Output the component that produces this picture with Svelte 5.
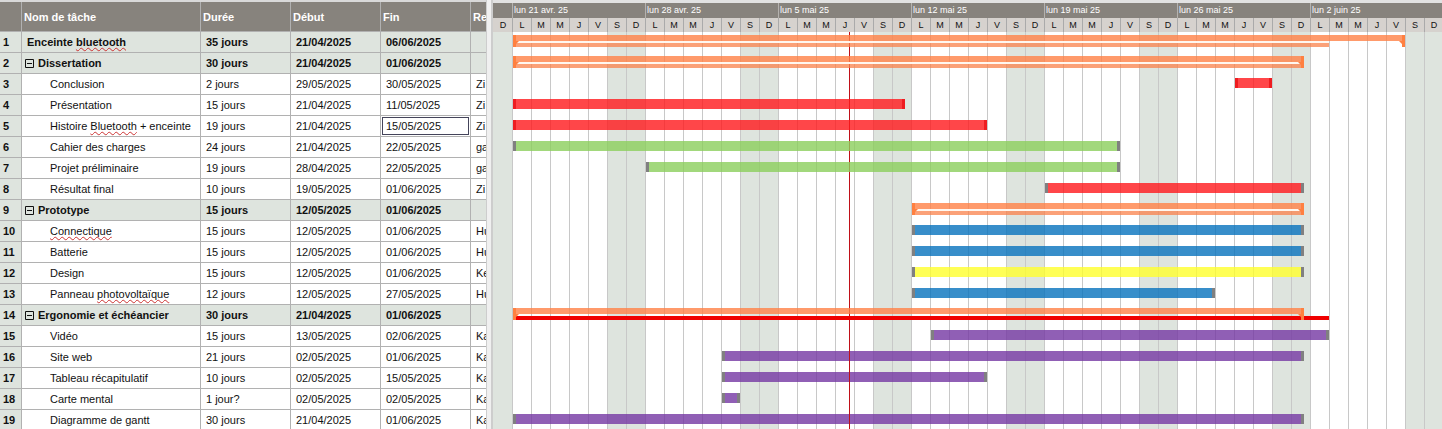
<script>
  const DAY = 19;
  // s: first day counted from 21 April, d: length in days, we: ends on a weekend
  const tasks = [
    { name: 'Enceinte bluetooth', sp: 'bluetooth', dur: '35 jours', from: '21/04/2025', to: '06/06/2025', res: '', kind: 'summary', level: 0, s: 0, d: 47, low: 43 },
    { name: 'Dissertation', dur: '30 jours', from: '21/04/2025', to: '01/06/2025', res: '', kind: 'summary', level: 1, s: 0, d: 42, we: true },
    { name: 'Conclusion', dur: '2 jours', from: '29/05/2025', to: '30/05/2025', res: 'Zi', kind: 'red', s: 38, d: 2, crit: true },
    { name: 'Présentation', dur: '15 jours', from: '21/04/2025', to: '11/05/2025', res: 'Zi', kind: 'red', s: 0, d: 21, we: true, crit: true },
    { name: 'Histoire Bluetooth + enceinte', sp: 'Bluetooth', dur: '19 jours', from: '21/04/2025', to: '15/05/2025', res: 'Zi', kind: 'red', s: 0, d: 25, crit: true, selected: true },
    { name: 'Cahier des charges', dur: '24 jours', from: '21/04/2025', to: '22/05/2025', res: 'ga', kind: 'green', s: 0, d: 32 },
    { name: 'Projet préliminaire', dur: '19 jours', from: '28/04/2025', to: '22/05/2025', res: 'ga', kind: 'green', s: 7, d: 25 },
    { name: 'Résultat final', dur: '10 jours', from: '19/05/2025', to: '01/06/2025', res: 'Zi', kind: 'red', s: 28, d: 14, we: true },
    { name: 'Prototype', dur: '15 jours', from: '12/05/2025', to: '01/06/2025', res: '', kind: 'summary', level: 1, s: 21, d: 21, we: true },
    { name: 'Connectique', sp: 'Connectique', dur: '15 jours', from: '12/05/2025', to: '01/06/2025', res: 'Hu', kind: 'blue', s: 21, d: 21, we: true },
    { name: 'Batterie', dur: '15 jours', from: '12/05/2025', to: '01/06/2025', res: 'Hu', kind: 'blue', s: 21, d: 21, we: true },
    { name: 'Design', dur: '15 jours', from: '12/05/2025', to: '01/06/2025', res: 'Ke', kind: 'yellow', s: 21, d: 21, we: true },
    { name: 'Panneau photovoltaïque', sp: 'photovoltaïque', dur: '12 jours', from: '12/05/2025', to: '27/05/2025', res: 'Hu', kind: 'blue', s: 21, d: 16 },
    { name: 'Ergonomie et échéancier', dur: '30 jours', from: '21/04/2025', to: '01/06/2025', res: '', kind: 'summary', level: 1, s: 0, d: 42, we: true, low: 43, late: true },
    { name: 'Vidéo', dur: '15 jours', from: '13/05/2025', to: '02/06/2025', res: 'Ka', kind: 'purple', s: 22, d: 21 },
    { name: 'Site web', dur: '21 jours', from: '02/05/2025', to: '01/06/2025', res: 'Ka', kind: 'purple', s: 11, d: 31, we: true },
    { name: 'Tableau récapitulatif', dur: '10 jours', from: '02/05/2025', to: '15/05/2025', res: 'Ka', kind: 'purple', s: 11, d: 14 },
    { name: 'Carte mental', dur: '1 jour?', from: '02/05/2025', to: '02/05/2025', res: 'Ka', kind: 'purple', s: 11, d: 1 },
    { name: 'Diagramme de gantt', dur: '30 jours', from: '21/04/2025', to: '01/06/2025', res: 'Ka', kind: 'purple', s: 0, d: 42, we: true }
  ];
  const weeks = ['lun 21 avr. 25', 'lun 28 avr. 25', 'lun 5 mai 25', 'lun 12 mai 25', 'lun 19 mai 25', 'lun 26 mai 25', 'lun 2 juin 25'];
  const letters = ['L', 'M', 'M', 'J', 'V', 'S', 'D'];
  const days = ['D', ...weeks.flatMap(() => letters)];
  const left = (t) => t.s * DAY + 20;
  const width = (t) => t.d * DAY - (t.we ? 7 : 1);
  const lowWidth = (t) => (t.low ? t.low * DAY - 1 : width(t));
  const parts = (t) => (t.sp ? t.name.split(t.sp) : [t.name]);
</script>

<main>
  <section class="grid-pane">
    <table>
      <colgroup><col class="c-num" /><col class="c-name" /><col class="c-date" /><col class="c-date" /><col class="c-date" /><col class="c-res" /></colgroup>
      <thead>
        <tr><th></th><th>Nom de tâche</th><th>Durée</th><th>Début</th><th>Fin</th><th>Re</th></tr>
      </thead>
      <tbody>
        {#each tasks as t, i}
          <tr class:group={t.kind === 'summary'}>
            <th scope="row">{i + 1}</th>
            <td class="name level{t.level ?? 2}">
              <div class="label">
                {#if t.level === 1}
                  <button aria-label="Réduire"><svg viewBox="0 0 9 9" width="9" height="9"><path d="M.5.5h8v8h-8zM2 4.5h5" fill="none" stroke="#111" /></svg></button>
                {/if}
                <span>{parts(t)[0]}{#if t.sp}<span class="spell">{t.sp}</span>{parts(t)[1]}{/if}</span>
              </div>
            </td>
            <td>{t.dur}</td>
            <td>{t.from}</td>
            <td class:selected={t.selected}><span>{t.to}</span></td>
            <td>{t.res}</td>
          </tr>
        {/each}
      </tbody>
    </table>
  </section>
  <div class="splitter"></div>
  <section class="chart">
    <div class="weeks">
      <span class="lead"></span>
      {#each weeks as w}<span class="week">{w}</span>{/each}
    </div>
    <div class="days">
      {#each days as d}<span>{d}</span>{/each}
    </div>
    <div class="body">
      <div class="stripes">
        {#each days as d}<i class:off={d === 'S' || d === 'D'}></i>{/each}
      </div>
      <div class="today"></div>
      {#each tasks as t}
        <div class="row">
          {#if t.kind === 'summary'}
            <div class="summary" style="left:{left(t)}px;width:{width(t)}px">
              <div class="upper"></div>
              <div class="lower" class:late={t.late} style="width:{lowWidth(t)}px"></div>
              <svg class="cap" viewBox="0 0 7 12" width="7" height="12"><path d="M0 0H3V6H6L3 9V12H0Z" /></svg>
              <svg class="cap end" viewBox="0 0 7 12" width="7" height="12"><path d="M0 0H3V6H6L3 9V12H0Z" /></svg>
            </div>
          {:else}
            <div class="bar {t.kind}" class:crit={t.crit} style="left:{left(t)}px;width:{width(t)}px"></div>
          {/if}
        </div>
      {/each}
    </div>
  </section>
</main>

<style>
  :global(body) { margin: 0; background: #fff; overflow: hidden; }
  main { display: flex; height: 100vh; overflow: hidden; font: 11px/14px "Liberation Sans", Arial, sans-serif; color: #111; }
  .grid-pane { flex: none; width: 486px; overflow: hidden; border-top: 2px solid #d9d9d9; box-sizing: border-box; }
  table { width: 511px; table-layout: fixed; border-collapse: separate; border-spacing: 0; }
  .c-num { width: 22px; }
  .c-name { width: 179px; }
  .c-date { width: 90px; }
  .c-res { width: 40px; }
  th, td { box-sizing: border-box; height: 21px; padding: 0 0 0 5px; border: solid #b1b1b1; border-width: 0 1px 1px 0; text-align: left; white-space: nowrap; overflow: hidden; }
  thead th { height: 30px; padding-left: 2px; background: #87837d; color: #fff; }
  tbody th { padding-left: 3px; background: #dee4de; }
  .group td { background: #dee4de; font-weight: bold; }
  .name.level0 { padding-left: 5px; }
  .name.level1 { padding-left: 3px; }
  .name.level2 { padding-left: 28px; }
  .label { display: flex; align-items: center; gap: 4px; }
  button { width: 9px; height: 9px; padding: 0; border: 0; background: none; }
  button svg { display: block; }
  .spell { text-decoration: underline wavy #c33 1px; text-underline-offset: 1px; text-decoration-skip-ink: none; }
  .selected { padding: 0; }
  .selected span { display: block; margin: 0 1px; padding-left: 3px; border: 1px solid #44445a; line-height: 16px; }
  .splitter { flex: none; width: 7px; box-sizing: border-box; background: #f0f0f0; border: solid #cdcdcd; border-width: 0 2px 0 1px; }
  .chart { flex: 1; min-width: 0; overflow: hidden; border-top: 3px solid #e2e2e2; box-sizing: border-box; }
  .weeks { display: flex; height: 15px; background: #87837d; color: #fff; font-size: 9px; line-height: 15px; }
  .lead, .week { flex: none; box-sizing: border-box; border-right: 1px solid #b5b2ae; }
  .lead { width: 20px; }
  .week { width: 133px; padding-left: 1px; white-space: nowrap; }
  .week:last-child { border: 0; }
  .days { display: flex; height: 14px; background: #d6d2ce; padding-left: 1px; font-size: 9px; line-height: 15px; }
  .days span { flex: none; width: 19px; box-sizing: border-box; border-right: 1px solid #aaa; text-align: center; }
  .body { position: relative; }
  .stripes { position: absolute; inset: 0; display: flex; padding-left: 1px; background: linear-gradient(#dee4de, #dee4de) 0 0 / 1px 100% no-repeat; }
  .stripes i { flex: none; width: 19px; box-sizing: border-box; border-right: 1px solid #c8c8c8; }
  .stripes .off { background: #dee4de; }
  .today { position: absolute; top: 0; bottom: 0; left: 356px; width: 1px; background: #c01018; z-index: 1; }
  .row { position: relative; height: 21px; }
  .bar { position: absolute; top: 4px; height: 10px; z-index: 2; box-sizing: border-box; border: solid #808080; border-width: 0 3px; background-clip: padding-box; }
  .red { background-color: rgba(255, 24, 28, .8); }
  .crit { border-color: #ee1c20; }
  .green { background-color: rgba(139, 206, 91, .8); }
  .blue { background-color: rgba(6, 114, 189, .8); }
  .yellow { background-color: rgba(255, 255, 44, .8); }
  .purple { background-color: rgba(116, 55, 163, .8); z-index: 0; }
  .summary { position: absolute; top: 3px; height: 12px; z-index: 2; }
  .upper { height: 6px; background: rgba(255, 129, 70, .8); }
  .lower { box-sizing: border-box; height: 6px; border-top: 2px solid #fff7f0; background: rgba(250, 129, 75, .75); background-clip: padding-box; }
  .lower.late { border-top-color: transparent; background-color: #f00000; }
  .cap { position: absolute; top: 0; left: 0; fill: #ff8040; }
  .end { left: auto; right: 0; transform: scaleX(-1); }
</style>
